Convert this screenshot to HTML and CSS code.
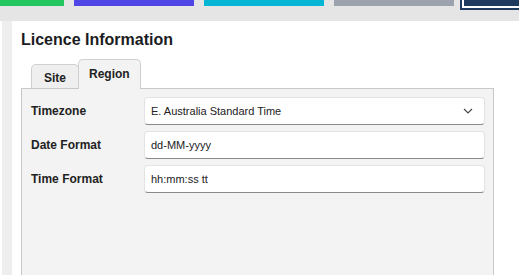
FILE: index.html
```html
<!DOCTYPE html>
<html lang="en">

<head>
    <meta charset="UTF-8">
    <meta name="viewport" content="width=device-width, initial-scale=1.0">
    <title>Licence Information</title>
    <link rel="stylesheet" href="styles.css">
</head>

<body>
    <div class="topbar">
        <div class="btn green"></div>
        <div class="btn purple"></div>
        <div class="btn cyan"></div>
        <div class="btn grey"></div>
        <div class="btn navy"></div>
    </div>

    <div class="main">
        <div class="rail"></div>
        <div class="content">
            <h1 class="title">Licence Information</h1>

            <div class="tabs">
                <div class="tab">Site</div>
                <div class="tab active">Region</div>
            </div>

            <div class="panel">
                <div class="row">
                    <label class="label">Timezone</label>
                    <div class="field select">
                        <span>E. Australia Standard Time</span>
                        <svg class="chevron" width="10" height="6" viewBox="0 0 10 6">
                            <path d="M1 1 L5 5 L9 1" fill="none" stroke="#444" stroke-width="1.1" />
                        </svg>
                    </div>
                </div>
                <div class="row">
                    <label class="label">Date Format</label>
                    <div class="field">dd-MM-yyyy</div>
                </div>
                <div class="row">
                    <label class="label">Time Format</label>
                    <div class="field">hh:mm:ss tt</div>
                </div>
            </div>
        </div>
    </div>
</body>

</html>
```

FILE: styles.css
```css
* {
    margin: 0;
    padding: 0;
    box-sizing: border-box;
}

body {
    width: 519px;
    height: 275px;
    overflow: hidden;
    background: #fff;
    font-family: "Liberation Sans", Arial, sans-serif;
    color: #222;
}

.topbar {
    display: flex;
    gap: 10px;
    width: 519px;
    height: 21px;
    overflow: hidden;
    background: #e5e5e5;
}

.btn {
    flex: none;
    width: 120px;
    height: 6px;
}

.green {
    width: 64px;
    background: #22c55e;
}

.purple {
    background: #4f46e5;
}

.cyan {
    background: #06b6d4;
}

.grey {
    background: #9ca3af;
}

.navy {
    flex: none;
    width: 80px;
    background: #1e3a5f;
    box-shadow: 0 0 0 2px #fff, 0 0 0 4px #1e3a5f;
}

.main {
    display: flex;
    height: 254px;
}

.rail {
    width: 10px;
    margin-left: 2px;
    background: #eeeeee;
}

.content {
    flex: 1;
    display: flex;
    flex-direction: column;
    padding: 9px 25px 0 9px;
}

.title {
    font-size: 16px;
    line-height: 20px;
    font-weight: bold;
    color: #1b1b22;
}

.tabs {
    display: flex;
    align-items: flex-end;
    margin-top: 9px;
    margin-left: 10px;
}

.tab {
    height: 24px;
    padding: 1px 12px 0;
    font-size: 12px;
    font-weight: bold;
    line-height: 24px;
    background: #efefef;
    border: 1px solid #cfcfcf;
    border-bottom: none;
    border-radius: 5px 5px 0 0;
}

.tab.active {
    position: relative;
    z-index: 1;
    height: 30px;
    line-height: 26px;
    padding: 1px 10px 0;
    margin-left: -1px;
    margin-bottom: -1px;
    background: #f3f3f3;
}

.panel {
    flex: 1;
    background: #f3f3f3;
    border: 1px solid #c8c8c8;
    border-bottom: none;
    padding: 8px 8px 0 9px;
    display: flex;
    flex-direction: column;
    gap: 6px;
}

.row {
    display: flex;
    align-items: center;
}

.label {
    width: 113px;
    font-size: 12px;
    font-weight: bold;
    color: #222;
}

.field {
    flex: 1;
    height: 28px;
    display: flex;
    align-items: center;
    padding: 0 6px;
    font-size: 11px;
    color: #222;
    background: #fff;
    border: 1px solid #e3e3e3;
    border-bottom-color: #8a8a8a;
    border-radius: 4px;
}

.select {
    justify-content: space-between;
}

.chevron {
    margin-right: 5px;
}
```
